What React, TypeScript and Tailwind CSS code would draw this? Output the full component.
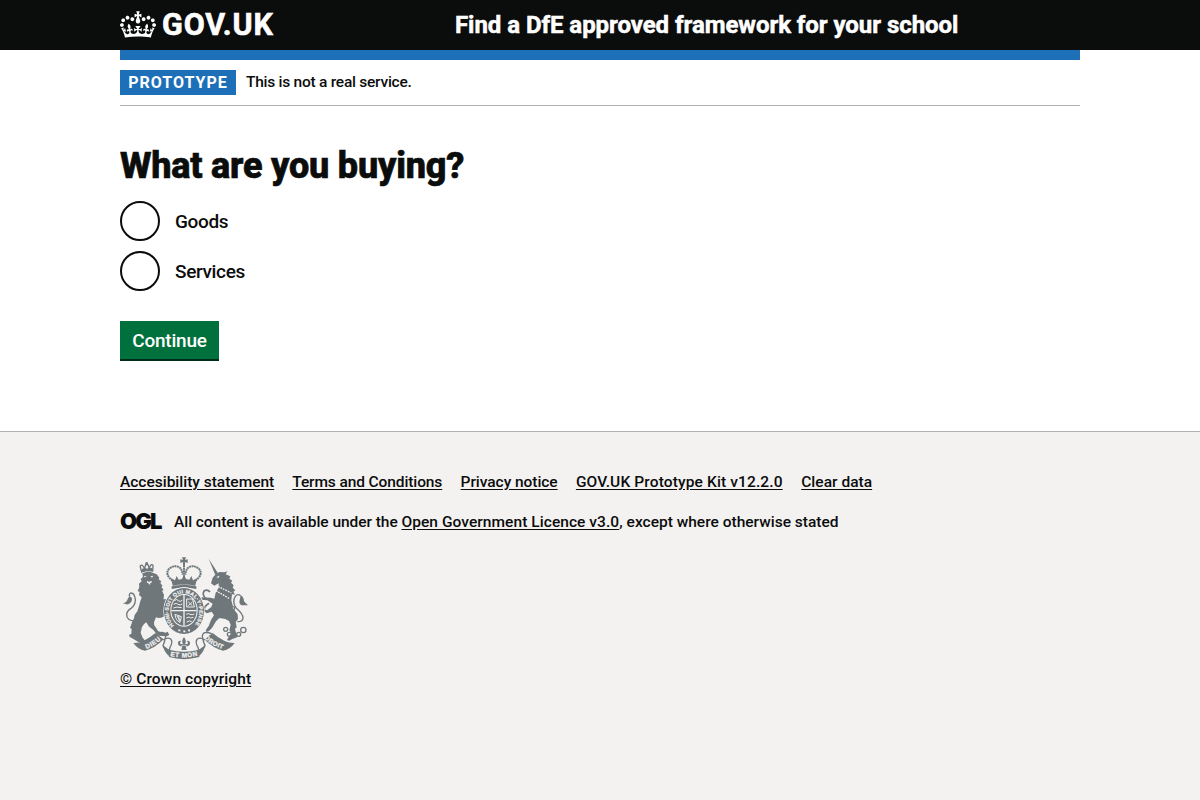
import React from "react";

const crownPath =
  "M25 30.2c3.5 1.5 7.7-.2 9.1-3.7 1.5-3.6-.2-7.8-3.9-9.2-3.6-1.4-7.6.3-9.1 3.9-1.4 3.5.3 7.5 3.9 9zM9 39.5c3.6 1.5 7.8-.2 9.2-3.7 1.5-3.6-.2-7.8-3.9-9.1-3.6-1.5-7.6.2-9.1 3.8-1.4 3.5.3 7.5 3.8 9zM4.4 57.2c3.5 1.5 7.7-.2 9.1-3.8 1.5-3.6-.2-7.7-3.9-9.1-3.5-1.5-7.6.3-9.1 3.8-1.4 3.5.3 7.6 3.9 9.1zm38.3-21.4c3.5 1.5 7.7-.2 9.1-3.8 1.5-3.6-.2-7.7-3.9-9.1-3.6-1.5-7.6.3-9.1 3.8-1.3 3.6.4 7.7 3.9 9.1zm64.4-5.6c-3.6 1.5-7.8-.2-9.1-3.7-1.5-3.6.2-7.8 3.8-9.2 3.6-1.4 7.7.3 9.2 3.9 1.3 3.5-.4 7.5-3.9 9zm15.9 9.3c-3.6 1.5-7.7-.2-9.1-3.7-1.5-3.6.2-7.8 3.7-9.1 3.6-1.5 7.7.2 9.2 3.8 1.5 3.5-.3 7.5-3.8 9zm4.7 17.7c-3.6 1.5-7.8-.2-9.2-3.8-1.5-3.6.2-7.7 3.9-9.1 3.6-1.5 7.7.3 9.2 3.8 1.3 3.5-.4 7.6-3.9 9.1zM89.3 35.8c-3.6 1.5-7.8-.2-9.2-3.8-1.4-3.6.2-7.7 3.9-9.1 3.6-1.5 7.7.3 9.2 3.8 1.4 3.6-.3 7.7-3.9 9.1zM69.7 17.7l8.9 4.7V9.3l-8.9 2.8c-.2-.3-.5-.6-.9-.9L72.4 0H59.6l3.5 11.2c-.3.3-.6.5-.9.9l-8.8-2.8v13.1l8.8-4.7c.3.3.6.7.9.9l-5 15.4v.1c-.2.8-.4 1.6-.4 2.4 0 4.1 3.1 7.5 7 8.1h.2c.3 0 .7.1 1 .1.4 0 .7 0 1-.1h.2c4-.6 7.1-4.1 7.1-8.1 0-.8-.1-1.7-.4-2.4V34l-5.1-15.4c.4-.2.7-.6 1-.9zM66 92.8c16.9 0 32.8 1.1 47.1 3.2 4-16.9 8.9-26.7 14-33.5l-9.6-3.4c1 4.9 1.1 7.2 0 10.2-1.5-1.4-3-4.3-4.2-8.7L108.6 76c2.8-2 5-3.2 7.5-3.3-4.4 9.4-10 11.9-13.6 11.2-4.3-.8-6.3-4.6-5.6-7.9 1-4.7 5.7-5.9 8-.5 4.3-8.7-3-11.4-7.6-8.8 7.1-7.2 7.9-13.5 2.1-21.1-8 6.1-8.1 12.3-4.5 20.8-4.7-5.4-12.1-2.5-9.5 6.2 3.4-5.2 7.9-2 7.2 3.1-.6 4.3-6.4 7.8-13.5 7.2-10.3-.9-10.9-8-11.2-13.8 2.5-.5 7.1 1.8 11 7.3L80.2 60c-4.1 4.4-8 5.3-12.3 5.4 1.4-4.4 8-11.6 8-11.6H55.5s6.4 7.2 7.9 11.6c-4.2-.1-8-1-12.3-5.4l1.4 16.4c3.9-5.5 8.5-7.7 10.9-7.3-.3 5.8-.9 12.8-11.1 13.8-7.2.6-12.9-2.9-13.5-7.2-.7-5 3.8-8.3 7.1-3.1 2.7-8.7-4.6-11.6-9.4-6.2 3.7-8.5 3.6-14.7-4.6-20.8-5.8 7.6-5 13.9 2.2 21.1-4.7-2.6-11.9.1-7.7 8.8 2.3-5.5 7.1-4.2 8.1.5.7 3.3-1.3 7.1-5.7 7.9-3.5.7-9-1.8-13.5-11.2 2.5.1 4.7 1.3 7.5 3.3l-4.7-15.4c-1.2 4.4-2.7 7.2-4.3 8.7-1.1-3-.9-5.3 0-10.2l-9.5 3.4c5 6.9 9.9 16.7 14 33.5 14.8-2.1 30.8-3.2 47.7-3.2z";

function Crest() {
  return (
    <svg viewBox="0 0 396 324" className="block h-[108px] w-[132px]" fill="#6f777b" aria-hidden="true">
      {/* lion crown */}
      <g>
        <path d="M68 54 L64 39 Q62 33 70 34 L77 43 L80 32 L87 32 L90 41 L97 32 Q103 31 102 37 L101 51 Q84 48 68 54Z" fill="none" stroke="#6f777b" strokeWidth="4" />
        <path d="M68 55 Q84 47 101 51 L100 43 L91 40 L85 44 L76 41 L68 46Z" />
        <circle cx="83" cy="28" r="4" />
      </g>
      {/* lion */}
      <path d="M70 58 Q86 50 101 56 L113 61 L121 71 L119 76 L127 82 L124 87 L131 96 L127 98 L134 109 L129 110 L135 122 Q131 138 136 154 Q133 170 141 181 L132 189 Q120 194 111 190 L105 205 Q103 212 111 221 L117 231 L131 237 Q140 237 146 233 L151 243 L143 247 L117 245 L103 228 L89 217 L82 205 Q73 210 69 219 L65 236 L71 251 L80 262 L74 266 L58 264 L42 254 L32 249 L30 242 L37 240 L38 224 L33 222 L39 205 L45 193 Q46 181 55 172 L60 156 L63 145 L68 130 L60 123 L62 113 L56 112 L61 99 L60 89 L68 82 L65 76 L72 68Z" />
      <path d="M75 65 l9 3 l-8 2z M94 67 l9 -2 l-4 6z M84 80 l6 4 l7 -4 l2 5 l-5 2 l-1 6 l-5 -5 l-4 -2z" fill="#f3f2f1" />
      <path d="M48 201 Q22 201 23 181 Q24 170 36 163 Q49 154 49 137 Q47 116 35 117 Q29 120 32 128" fill="none" stroke="#6f777b" strokeWidth="4" />
      <path d="M11 149 Q24 145 26 135 Q31 123 39 132 Q40 145 29 150 Q24 153 19 149Z" />
      <path d="M116 140 l22 -5 l12 5 l-5 9 l-13 1 l-14 9z" />
      {/* unicorn */}
      <path d="M269 14 L297 58 L289 63Z" />
      <path d="M276 88 L281 71 L290 61 L301 54 L316 55 L325 52 L320 61 L334 67 L331 74 L340 80 L336 86 L344 94 L341 101 L349 109 L343 113 L348 122 L339 121 L337 139 L341 154 L348 170 L356 181 L357 195 L350 204 L353 220 L348 224 L352 240 L355 250 L340 255 L331 260 L324 258 L331 245 L338 239 L331 229 L335 212 L330 201 Q318 191 300 193 L291 202 L279 222 L269 232 L263 234 L260 229 L269 216 L276 198 L285 184 L278 173 L264 178 L249 169 L253 164 L264 169 L277 159 L281 149 L265 139 L246 137 L248 130 L275 131 L286 134 L290 116 L299 101 L299 88 L286 95Z" />
      <path d="M285 107 Q305 118 330 133 M291 95 Q312 104 337 117" fill="none" stroke="#f3f2f1" strokeWidth="4" strokeDasharray="5 3" />
      <path d="M292 69 l10 -4 l-4 7z" fill="#f3f2f1" />
      <path d="M355 203 Q371 204 372 192 Q372 180 352 163 Q338 143 349 127 Q356 118 365 125" fill="none" stroke="#6f777b" strokeWidth="4" />
      <path d="M365 124 Q374 128 375 142 Q381 149 387 154 L367 154 Q359 149 362 139Z" />
      <path d="M262 135 Q248 124 255 111 Q265 104 273 114 M270 148 Q257 156 256 164" fill="none" stroke="#6f777b" strokeWidth="5" />
      <g fill="none" stroke="#6f777b" strokeWidth="4">
        <circle cx="320" cy="226" r="6" />
        <circle cx="331" cy="241" r="6" />
        <circle cx="359" cy="241" r="6" />
        <circle cx="373" cy="228" r="8" />
        <circle cx="343" cy="162" r="4" fill="#f3f2f1" />
      </g>
      {/* central crown */}
      <g>
        <path d="M189 10 h12 l-3 8 l8 -2 v11 l-8 -3 v11 h-6 v-11 l-8 3 v-11 l8 2z" />
        <path d="M161 80 Q137 62 149 46 Q165 31 181 40 Q189 45 191 62 M229 80 Q253 62 241 46 Q225 31 209 40 Q201 45 199 62 M195 34 V75" fill="none" stroke="#6f777b" strokeWidth="6" strokeDasharray="6 1.5" />
        <path d="M156 73 l12 6 l5 -13 l6 11 l10 -2 l6 -13 l6 13 l10 2 l6 -11 l5 13 l12 -6 l-5 22 q-34 -7 -68 0z M158 97 q37 -9 74 0 v8 q-37 -8 -74 0z" />
      </g>
      {/* garter and shield */}
      <ellipse cx="195" cy="171" rx="62" ry="72" fill="#f3f2f1" />
      <ellipse cx="195" cy="171" rx="60" ry="69" />
      <ellipse cx="195" cy="169" rx="41" ry="49" fill="#f3f2f1" />
      <ellipse cx="195" cy="169" rx="38" ry="46" />
      <path id="garter" d="M170 219 A46 55 0 1 1 220 219" fill="none" />
      <text fill="#f3f2f1" stroke="#f3f2f1" strokeWidth="0.6" fontFamily="Liberation Sans" fontSize="15.5" fontWeight="700" textLength="246">
        <textPath href="#garter" startOffset="6">HONI·SOIT QUI MAL·Y·PENSE</textPath>
      </text>
      <path d="M195 123 V215 M157 170 H233" stroke="#f3f2f1" strokeWidth="4" />
      <g fill="none" stroke="#f3f2f1" strokeWidth="3">
        <path d="M166 140 q8 -7 12 0 q5 5 12 -1 M164 151 q9 -6 13 0 q7 4 13 -1 M163 162 q9 -5 25 -1" />
        <path d="M203 135 h18 l5 24 h-23z M208 144 l12 11 m0 -11 l-12 11" />
        <path d="M168 181 q2 20 15 24 l4 -17z M174 186 l8 13 M179 184 l2 17" />
        <path d="M202 181 q8 -5 11 0 q6 3 13 -1 M202 192 q10 -6 13 0 l8 -2 M203 204 q8 -6 15 -1" />
      </g>
      <path d="M178 229 h6 m9 3 h6 m8 -3 h6" stroke="#f3f2f1" strokeWidth="5" />
      {/* ribbon */}
      <path d="M43 267 Q73 268 109 237 L134 256 Q108 283 78 290 Q56 286 43 267Z M347 267 Q317 268 281 237 L256 256 Q282 283 312 290 Q334 286 347 267Z" />
      <path d="M150 287 Q195 299 240 287 L241 309 Q195 322 150 309Z" />
      <path d="M112 239 Q139 229 140 247 Q137 265 132 275 Q136 286 151 290 M132 258 Q146 249 155 255 Q163 264 153 280 L151 289 M278 239 Q251 229 250 247 Q253 265 258 275 Q254 286 239 290 M258 258 Q244 249 235 255 Q227 264 237 280 L239 289" fill="none" stroke="#6f777b" strokeWidth="4" />
      <path d="M132 274 L151 288 V307 Q134 294 132 274Z M258 274 L239 288 V307 Q256 294 258 274Z" />
      <path id="dieu" d="M82 285 Q111 273 130 252" fill="none" />
      <path id="droit" d="M256 253 Q276 274 316 287" fill="none" />
      <path id="mon" d="M154 306 Q195 315 240 304" fill="none" />
      <g fill="#f3f2f1" stroke="#f3f2f1" strokeWidth="0.8" fontFamily="Liberation Sans" fontSize="19" fontWeight="700">
        <text textLength="52"><textPath href="#dieu">DIEU</textPath></text>
        <text textLength="64"><textPath href="#droit">DROIT</textPath></text>
        <text textLength="82"><textPath href="#mon">ET MON</textPath></text>
      </g>
      {/* fleur */}
      <path d="M195 249 Q204 261 198 270 H206 Q208 262 202 261 Q214 258 213 270 Q211 277 200 277 L203 288 H187 L190 277 Q179 277 177 270 Q176 258 188 261 Q182 262 184 270 H192 Q186 261 195 249Z" />
      <path d="M187 274 h16" stroke="#f3f2f1" strokeWidth="2" />
    </svg>
  );
}

function Radio({ label, id }: { label: string; id: string }) {
  return (
    <label htmlFor={id} className="flex h-10 items-center gap-[15px] text-[19px] font-medium leading-[25px] tracking-[-0.35px]">
      <input id={id} type="radio" name="buying" className="size-10 shrink-0 appearance-none rounded-full border-2 border-[#0b0c0c] bg-white" />
      <span>{label}</span>
    </label>
  );
}

const links: [string, string][] = [
  ["Accesibility statement", "w-[154px] tracking-[-0.01px]"],
  ["Terms and Conditions", "w-[150px] tracking-[-0.11px]"],
  ["Privacy notice", "w-[97px] tracking-[-0.05px]"],
  ["GOV.UK Prototype Kit v12.2.0", "w-[207px] tracking-[0.13px]"],
  ["Clear data", "w-[71px] tracking-[0.03px]"],
];

export default function App() {
  return (
    <div className="flex min-h-screen flex-col bg-white font-['Roboto',sans-serif] font-medium text-[#0b0c0c]">
      <header className="h-[50px] bg-[#0b0c0c] text-white">
        <div className="mx-auto flex h-full w-[960px] items-center whitespace-nowrap">
          <a href="#" className="flex w-[335px] items-center gap-1.5 pb-0.5">
            <svg viewBox="0 0 132 97" className="h-[27px] w-9" fill="currentColor" aria-hidden="true"><path d={crownPath} /></svg>
            <span className="pt-0.5 text-[30.5px] font-bold leading-[30px] tracking-[0.9px] [-webkit-text-stroke:0.6px_white]">GOV.UK</span>
          </a>
          <a href="#" className="text-[24px] font-bold leading-[30px] tracking-[-0.05px] [-webkit-text-stroke:0.5px_white]">Find a DfE approved framework for your school</a>
        </div>
      </header>
      <div className="mx-auto w-[960px]">
        <div className="h-2.5 bg-[#1d70b8]" />
        <div className="flex h-[46px] items-center gap-2.5 border-b border-[#b1b4b6] whitespace-nowrap">
          <strong className="flex h-[25px] w-[116px] items-center justify-center bg-[#1d70b8] text-[16px] font-bold tracking-[1px] text-white">PROTOTYPE</strong>
          <span className="pb-0.5 text-[15.5px] leading-5 tracking-[-0.25px]">This is not a real service.</span>
        </div>
        <main className="h-[325px] pt-10">
          <h1 className="text-[36px] font-extrabold leading-10 tracking-[-0.2px] [-webkit-text-stroke:0.7px_#0b0c0c]">What are you buying?</h1>
          <div className="mt-[15px] flex flex-col gap-2.5">
            <Radio id="goods" label="Goods" />
            <Radio id="services" label="Services" />
          </div>
          <button className="mt-[30px] flex h-10 w-[99px] items-center justify-center border-b-2 border-[#002d18] bg-[#00703c] pt-0.5 text-[19px] font-medium tracking-[-0.2px] text-white">Continue</button>
        </main>
      </div>
      <footer className="grow border-t border-[#b1b4b6] bg-[#f3f2f1] text-[15.5px] leading-5">
        <div className="mx-auto w-[960px] whitespace-nowrap pt-10">
          <ul className="flex gap-[18.3px]">
            {links.map(([text, style]) => (
              <li key={text} className={style}><a href="#" className="underline underline-offset-2">{text}</a></li>
            ))}
          </ul>
          <div className="mt-5 flex items-center">
            <span className="w-[54px] pb-0.5 font-['Inter',sans-serif] text-[22px] font-black leading-[18px] tracking-[-1.8px]">OGL</span>
            <p className="tracking-[0.01px]"><span className="tracking-[-0.05px]">All content is available under the </span><a href="#" className="tracking-[0.06px] underline underline-offset-2">Open Government Licence v3.0</a>, except where otherwise stated</p>
          </div>
          <a href="#" className="mt-[22px] block w-[131px]">
            <span className="-ml-px block"><Crest /></span>
            <span className="mt-[7px] block tracking-[0.11px] underline underline-offset-2">© Crown copyright</span>
          </a>
        </div>
      </footer>
    </div>
  );
}
